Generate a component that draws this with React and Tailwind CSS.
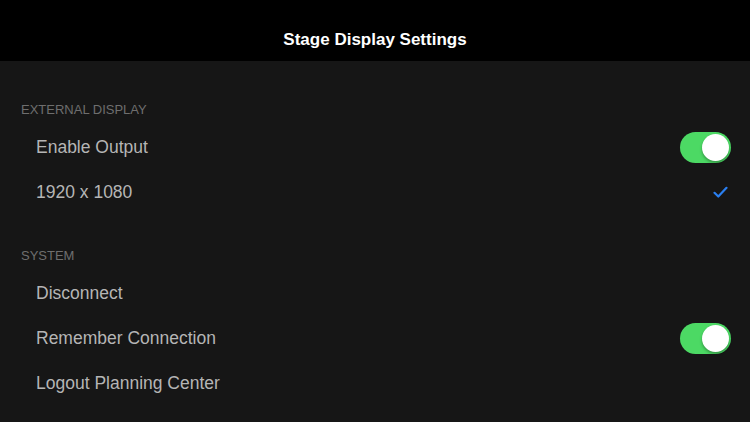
function Toggle() {
    return (
        <div className="w-[51px] h-[31px] rounded-full bg-[#4cd964] flex items-center justify-end p-[2px]">
            <div className="w-[27px] h-[27px] rounded-full bg-white shadow-[0_2px_3px_rgba(0,0,0,0.3)]"></div>
        </div>
    );
}

function CheckMark() {
    return (
        <svg width="15" height="13" viewBox="0 0 15 13" className="mr-[3px]">
            <path d="M1.5 6.8 L5.3 10.5 L13.5 1.8" fill="none" stroke="#2a7ff0" strokeWidth="2.2" strokeLinecap="round" strokeLinejoin="round" />
        </svg>
    );
}

function Row({ label, right }) {
    return (
        <div className="h-[45px] flex items-center justify-between pl-[36px] pr-[19px]">
            <span className="text-[17.5px] text-[#b5b5b5]">{label}</span>
            {right}
        </div>
    );
}

function SectionHeader({ children }) {
    return (
        <div className="pl-[21px] pb-[7px] text-[13px] leading-[16px] text-[#6e6e6e] uppercase">
            {children}
        </div>
    );
}

export default function App() {
    return (
        <div className="w-[750px] h-[422px] bg-[#161616] overflow-hidden" style={{ fontFamily: '"Liberation Sans", Arial, sans-serif' }}>
            <div className="h-[61px] bg-black flex items-center justify-center pt-[18px]">
                <h1 className="text-[17px] font-bold text-white">Stage Display Settings</h1>
            </div>

            <div className="pt-[41px]">
                <SectionHeader>External Display</SectionHeader>
                <Row label="Enable Output" right={<Toggle />} />
                <Row label="1920 x 1080" right={<CheckMark />} />
            </div>

            <div className="pt-[33px]">
                <SectionHeader>System</SectionHeader>
                <Row label="Disconnect" />
                <Row label="Remember Connection" right={<Toggle />} />
                <Row label="Logout Planning Center" />
            </div>
        </div>
    );
}
